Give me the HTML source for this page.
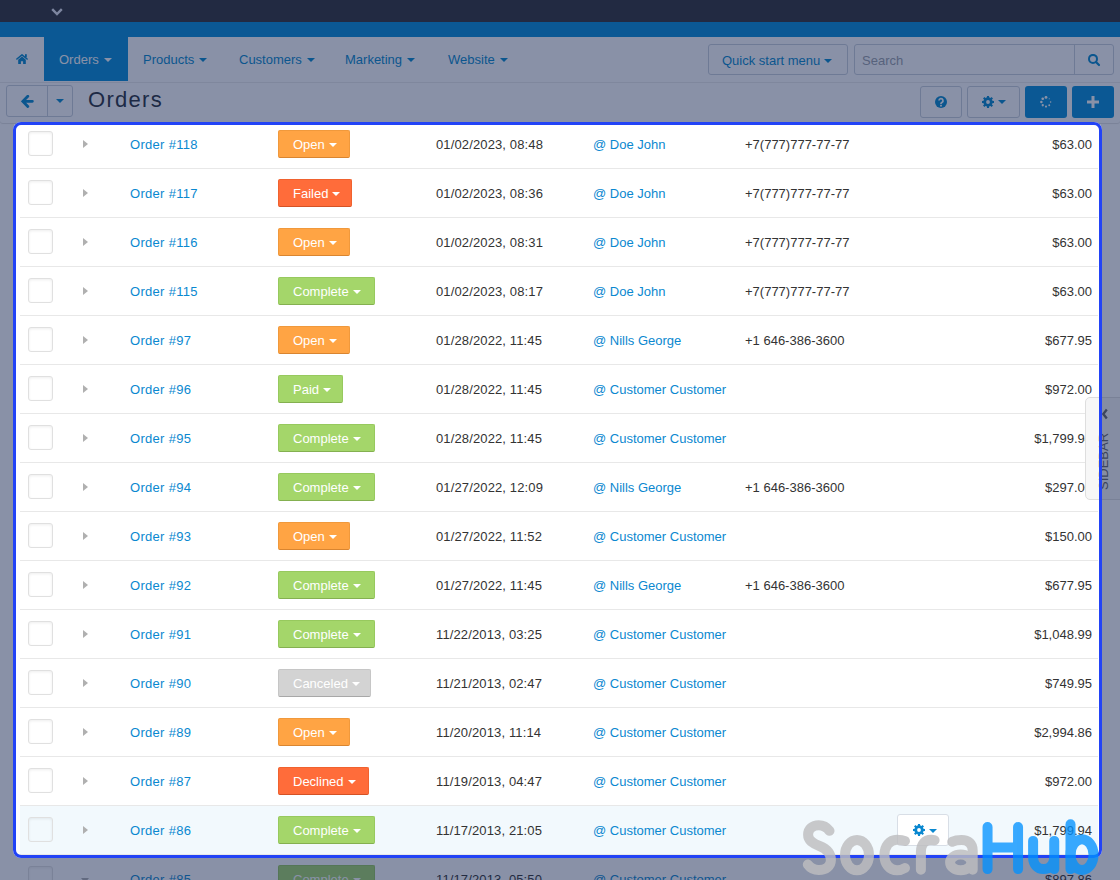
<!DOCTYPE html>
<html><head><meta charset="utf-8">
<style>
*{box-sizing:border-box;margin:0;padding:0}
html,body{width:1120px;height:880px;overflow:hidden}
body{position:relative;background:#fff;font-family:"Liberation Sans",sans-serif;font-size:13px;color:#333}
.abs{position:absolute}
svg{display:block}
#topbar{left:0;top:0;width:1120px;height:22px;background:#303134}
#bluebar{left:0;top:22px;width:1120px;height:15px;background:#028dd8}
#nav{left:0;top:37px;width:1120px;height:46px;background:#fff;border-bottom:1px solid #ebebeb}
.navi{position:absolute;top:0;height:44px;line-height:46px;color:#0388cc;white-space:nowrap}
.navi.act{background:#028dd8;color:#fff;left:44px;width:84px;padding-left:15px}
.caret{display:inline-block;width:0;height:0;border-left:4px solid transparent;border-right:4px solid transparent;border-top:4px solid currentColor;vertical-align:middle;margin-left:5px;position:relative;top:-1px}
#toolbar{z-index:2;left:0;top:83px;width:1120px;height:40px;background:#fff;border-radius:0 0 3px 3px;box-shadow:0 1px 1px rgba(0,0,0,.13)}
.btn{position:absolute;border:1px solid #c9d0da;border-radius:3px;background:#fff}
.btnp{position:absolute;border-radius:3px;background:#028dd8}
#content{left:13px;top:122px;width:1089px;height:760px;background:#fff}
.row{position:absolute;left:20px;width:1078px;height:49px;border-top:1px solid #e8e8e8;background:#fff}
.row.hover{background:#f2f9fd}
.cb{position:absolute;left:8px;top:11px;width:25px;height:25px;border:1px solid #e0e0e0;border-radius:3px;background:transparent;box-shadow:inset 0 1px 3px rgba(0,0,0,.07)}
.tri{position:absolute;left:63px;top:20px;width:0;height:0;border-top:4px solid transparent;border-bottom:4px solid transparent;border-left:5px solid #b0b0b0}
.trid{position:absolute;left:61px;top:23px;width:0;height:0;border-left:4px solid transparent;border-right:4px solid transparent;border-top:5px solid #b0b0b0}
.ord{position:absolute;left:110px;top:1px;letter-spacing:.3px;line-height:48px;color:#0a88d0;white-space:nowrap}
.st{position:absolute;left:258px;top:10px;height:28px;line-height:27px;color:#fff;border-radius:2px;padding-left:14px;white-space:nowrap}
.st .caret{margin-left:4px;border-top-color:#fff}
.open{background:#ffa444;border:1px solid #f0993c;border-bottom-color:#d98530}
.failed{background:#ff6c3a;border:1px solid #f0622f;border-bottom-color:#d45226}
.complete{background:#a4d66a;border:1px solid #97c95e;border-bottom-color:#84b050}
.paid{background:#a4d66a;border:1px solid #97c95e;border-bottom-color:#84b050}
.canceled{background:#d3d3d3;border:1px solid #c6c6c6;border-bottom-color:#a8a8a8}
.dt{position:absolute;left:416px;top:1px;letter-spacing:.13px;line-height:48px;white-space:nowrap}
.cu{position:absolute;left:573px;top:1px;line-height:48px;color:#0a88d0;white-space:nowrap}
.ph{position:absolute;left:725px;top:1px;line-height:48px;white-space:nowrap}
.am{position:absolute;right:6px;top:1px;line-height:48px;white-space:nowrap}
.gbtn{position:absolute;left:877px;top:8px;width:52px;height:32px;border:1px solid #d8dee6;border-radius:3px;background:#fff}
.gc{position:absolute;left:31px;top:14px;margin:0;border-top-color:#0a88d0}
#sidebar{z-index:3;left:1085px;top:397px;width:60px;height:103px;background:#f7f7f7;border:1px solid #dedede;border-radius:5px 0 0 5px}
#hl{z-index:5;left:13px;top:122px;width:1089px;height:736px;border:3px solid #2243f6;border-radius:8px;box-shadow:0 0 0 3000px rgba(20,35,80,.5)}
#wm{left:790px;top:800px}

</style></head><body>
<svg width="0" height="0" style="position:absolute">
<defs>
<symbol id="gear" viewBox="0 0 12 12"><circle cx="6" cy="6" r="3.3" fill="none" stroke="currentColor" stroke-width="2.8"/><g fill="currentColor"><rect x="4.95" y="0" width="2.1" height="3.2" transform="rotate(0 6 6)"/><rect x="4.95" y="0" width="2.1" height="3.2" transform="rotate(45 6 6)"/><rect x="4.95" y="0" width="2.1" height="3.2" transform="rotate(90 6 6)"/><rect x="4.95" y="0" width="2.1" height="3.2" transform="rotate(135 6 6)"/><rect x="4.95" y="0" width="2.1" height="3.2" transform="rotate(180 6 6)"/><rect x="4.95" y="0" width="2.1" height="3.2" transform="rotate(225 6 6)"/><rect x="4.95" y="0" width="2.1" height="3.2" transform="rotate(270 6 6)"/><rect x="4.95" y="0" width="2.1" height="3.2" transform="rotate(315 6 6)"/></g></symbol>
</defs>
</svg>
<div id="topbar" class="abs">
  <svg class="abs" style="left:51px;top:8px" width="12" height="8" viewBox="0 0 12 8"><path d="M1.2 1.2L6 6l4.8-4.8" stroke="#e8e8f0" stroke-width="2.4" fill="none"/></svg>
</div>
<div id="bluebar" class="abs"></div>
<div id="nav" class="abs">
  <svg class="abs" style="left:16px;top:17px" width="13" height="11" viewBox="0 0 13 11"><path d="M.9 5L6 .9 11.1 5" stroke="#0388cc" stroke-width="1.6" fill="none" stroke-linecap="round" stroke-linejoin="round"/><rect x="9" y=".2" width="1.8" height="3.2" fill="#0388cc"/><path d="M2.2 5.7L6 2.6 9.8 5.7V10H7.1V7.2H4.9V10H2.2z" fill="#0388cc"/></svg>
  <div class="navi act">Orders<span class="caret"></span></div>
  <div class="navi" style="left:143px">Products<span class="caret"></span></div>
  <div class="navi" style="left:239px">Customers<span class="caret"></span></div>
  <div class="navi" style="left:345px">Marketing<span class="caret"></span></div>
  <div class="navi" style="left:448px">Website<span class="caret"></span></div>
  <div class="btn" style="left:708px;top:7px;width:140px;height:31px;line-height:31px;padding-left:13px;color:#0388cc">Quick start menu<span class="caret" style="margin-left:4px"></span></div>
  <div class="btn" style="left:854px;top:7px;width:260px;height:31px;line-height:31px;padding-left:7px;color:#9aa0a8;border-radius:3px">Search
    <div class="abs" style="left:219px;top:0;width:1px;height:29px;background:#c9d0da"></div>
    <svg class="abs" style="left:233px;top:9px" width="14" height="14" viewBox="0 0 14 14"><circle cx="5" cy="4.9" r="4" stroke="#0388cc" stroke-width="2" fill="none"/><path d="M8.2 8.2L11 11" stroke="#0388cc" stroke-width="2.2" stroke-linecap="round"/></svg>
  </div>
</div>
<div id="toolbar" class="abs">
  <div class="btn" style="left:6px;top:2px;width:67px;height:32px">
    <div class="abs" style="left:40px;top:0;width:1px;height:30px;background:#c9d0da"></div>
    <svg class="abs" style="left:14px;top:9px" width="13" height="14" viewBox="0 0 13 14"><path d="M6.8 1.2L1.8 6.3 6.8 11.4M2.2 6.3H11.4" stroke="#0388cc" stroke-width="2.8" fill="none" stroke-linecap="round"/></svg>
    <span class="caret" style="position:absolute;left:49px;top:13px;margin:0;color:#0388cc"></span>
  </div>
  <div class="abs" style="left:88px;top:-1px;line-height:36px;font-size:22px;color:#28303a;letter-spacing:1.3px">Orders</div>
  <div class="btn" style="left:920px;top:3px;width:42px;height:32px">
    <svg class="abs" style="left:14px;top:9px" width="12" height="12" viewBox="0 0 12 12"><circle cx="6" cy="6" r="6" fill="#0388cc"/><path d="M4 4.6a2 2 0 1 1 2.9 1.8c-.6.3-.9.6-.9 1.2v.5" stroke="#fff" stroke-width="1.7" fill="none"/><rect x="5.1" y="8.8" width="1.8" height="1.7" fill="#fff"/></svg>
  </div>
  <div class="btn" style="left:967px;top:3px;width:53px;height:32px">
    <svg class="abs" style="left:14px;top:9px;color:#0388cc" width="12" height="12" viewBox="0 0 12 12"><circle cx="6" cy="6" r="3.3" fill="none" stroke="currentColor" stroke-width="2.8"/><g fill="currentColor"><rect x="4.95" y="0" width="2.1" height="3.2" transform="rotate(0 6 6)"/><rect x="4.95" y="0" width="2.1" height="3.2" transform="rotate(45 6 6)"/><rect x="4.95" y="0" width="2.1" height="3.2" transform="rotate(90 6 6)"/><rect x="4.95" y="0" width="2.1" height="3.2" transform="rotate(135 6 6)"/><rect x="4.95" y="0" width="2.1" height="3.2" transform="rotate(180 6 6)"/><rect x="4.95" y="0" width="2.1" height="3.2" transform="rotate(225 6 6)"/><rect x="4.95" y="0" width="2.1" height="3.2" transform="rotate(270 6 6)"/><rect x="4.95" y="0" width="2.1" height="3.2" transform="rotate(315 6 6)"/></g></svg>
    <span class="caret" style="position:absolute;left:30px;top:13px;margin:0;color:#0388cc"></span>
  </div>
  <div class="btnp" style="left:1025px;top:3px;width:42px;height:32px">
    <svg class="abs" style="left:15px;top:10px" width="12" height="12" viewBox="0 0 12 12">
      <circle cx="6.00" cy="1.40" r="1.45" fill="#fff"/><circle cx="2.75" cy="2.75" r="1.35" fill="#fff"/><circle cx="1.40" cy="6.00" r="1.25" fill="#fff"/><circle cx="2.75" cy="9.25" r="1.15" fill="#fff"/><circle cx="6.00" cy="10.60" r="1.05" fill="#fff"/><circle cx="9.25" cy="9.25" r="0.95" fill="#fff"/><circle cx="10.60" cy="6.00" r="0.8" fill="#fff"/><circle cx="9.25" cy="2.75" r="0.6" fill="#fff"/></svg>
  </div>
  <div class="btnp" style="left:1072px;top:3px;width:42px;height:32px">
    <svg class="abs" style="left:15px;top:10px" width="12" height="12" viewBox="0 0 12 12"><path d="M6 0v12M0 6h12" stroke="#fff" stroke-width="3"/></svg>
  </div>
</div>
<div id="content" class="abs"></div>
<div class="row" style="top:119px"><div class="cb"></div><div class="tri"></div><div class="ord">Order #118</div><div class="st open" style="width:72px">Open<span class="caret"></span></div><div class="dt">01/02/2023, 08:48</div><div class="cu">@ Doe John</div><div class="ph">+7(777)777-77-77</div><div class="am">$63.00</div></div>
<div class="row" style="top:168px"><div class="cb"></div><div class="tri"></div><div class="ord">Order #117</div><div class="st failed" style="width:74px">Failed<span class="caret"></span></div><div class="dt">01/02/2023, 08:36</div><div class="cu">@ Doe John</div><div class="ph">+7(777)777-77-77</div><div class="am">$63.00</div></div>
<div class="row" style="top:217px"><div class="cb"></div><div class="tri"></div><div class="ord">Order #116</div><div class="st open" style="width:72px">Open<span class="caret"></span></div><div class="dt">01/02/2023, 08:31</div><div class="cu">@ Doe John</div><div class="ph">+7(777)777-77-77</div><div class="am">$63.00</div></div>
<div class="row" style="top:266px"><div class="cb"></div><div class="tri"></div><div class="ord">Order #115</div><div class="st complete" style="width:97px">Complete<span class="caret"></span></div><div class="dt">01/02/2023, 08:17</div><div class="cu">@ Doe John</div><div class="ph">+7(777)777-77-77</div><div class="am">$63.00</div></div>
<div class="row" style="top:315px"><div class="cb"></div><div class="tri"></div><div class="ord">Order #97</div><div class="st open" style="width:72px">Open<span class="caret"></span></div><div class="dt">01/28/2022, 11:45</div><div class="cu">@ Nills George</div><div class="ph">+1 646-386-3600</div><div class="am">$677.95</div></div>
<div class="row" style="top:364px"><div class="cb"></div><div class="tri"></div><div class="ord">Order #96</div><div class="st paid" style="width:65px">Paid<span class="caret"></span></div><div class="dt">01/28/2022, 11:45</div><div class="cu">@ Customer Customer</div><div class="ph"></div><div class="am">$972.00</div></div>
<div class="row" style="top:413px"><div class="cb"></div><div class="tri"></div><div class="ord">Order #95</div><div class="st complete" style="width:97px">Complete<span class="caret"></span></div><div class="dt">01/28/2022, 11:45</div><div class="cu">@ Customer Customer</div><div class="ph"></div><div class="am">$1,799.94</div></div>
<div class="row" style="top:462px"><div class="cb"></div><div class="tri"></div><div class="ord">Order #94</div><div class="st complete" style="width:97px">Complete<span class="caret"></span></div><div class="dt">01/27/2022, 12:09</div><div class="cu">@ Nills George</div><div class="ph">+1 646-386-3600</div><div class="am">$297.00</div></div>
<div class="row" style="top:511px"><div class="cb"></div><div class="tri"></div><div class="ord">Order #93</div><div class="st open" style="width:72px">Open<span class="caret"></span></div><div class="dt">01/27/2022, 11:52</div><div class="cu">@ Customer Customer</div><div class="ph"></div><div class="am">$150.00</div></div>
<div class="row" style="top:560px"><div class="cb"></div><div class="tri"></div><div class="ord">Order #92</div><div class="st complete" style="width:97px">Complete<span class="caret"></span></div><div class="dt">01/27/2022, 11:45</div><div class="cu">@ Nills George</div><div class="ph">+1 646-386-3600</div><div class="am">$677.95</div></div>
<div class="row" style="top:609px"><div class="cb"></div><div class="tri"></div><div class="ord">Order #91</div><div class="st complete" style="width:97px">Complete<span class="caret"></span></div><div class="dt">11/22/2013, 03:25</div><div class="cu">@ Customer Customer</div><div class="ph"></div><div class="am">$1,048.99</div></div>
<div class="row" style="top:658px"><div class="cb"></div><div class="tri"></div><div class="ord">Order #90</div><div class="st canceled" style="width:93px">Canceled<span class="caret"></span></div><div class="dt">11/21/2013, 02:47</div><div class="cu">@ Customer Customer</div><div class="ph"></div><div class="am">$749.95</div></div>
<div class="row" style="top:707px"><div class="cb"></div><div class="tri"></div><div class="ord">Order #89</div><div class="st open" style="width:72px">Open<span class="caret"></span></div><div class="dt">11/20/2013, 11:14</div><div class="cu">@ Customer Customer</div><div class="ph"></div><div class="am">$2,994.86</div></div>
<div class="row" style="top:756px"><div class="cb"></div><div class="tri"></div><div class="ord">Order #87</div><div class="st failed" style="width:91px">Declined<span class="caret"></span></div><div class="dt">11/19/2013, 04:47</div><div class="cu">@ Customer Customer</div><div class="ph"></div><div class="am">$972.00</div></div>
<div class="row hover" style="top:805px"><div class="cb"></div><div class="tri"></div><div class="ord">Order #86</div><div class="st complete" style="width:97px">Complete<span class="caret"></span></div><div class="dt">11/17/2013, 21:05</div><div class="cu">@ Customer Customer</div><div class="ph"></div><div class="gbtn"><svg width="12" height="12" viewBox="0 0 12 12" style="position:absolute;left:15px;top:9px;color:#0a88d0"><circle cx="6" cy="6" r="3.3" fill="none" stroke="currentColor" stroke-width="2.8"/><g fill="currentColor"><rect x="4.95" y="0" width="2.1" height="3.2" transform="rotate(0 6 6)"/><rect x="4.95" y="0" width="2.1" height="3.2" transform="rotate(45 6 6)"/><rect x="4.95" y="0" width="2.1" height="3.2" transform="rotate(90 6 6)"/><rect x="4.95" y="0" width="2.1" height="3.2" transform="rotate(135 6 6)"/><rect x="4.95" y="0" width="2.1" height="3.2" transform="rotate(180 6 6)"/><rect x="4.95" y="0" width="2.1" height="3.2" transform="rotate(225 6 6)"/><rect x="4.95" y="0" width="2.1" height="3.2" transform="rotate(270 6 6)"/><rect x="4.95" y="0" width="2.1" height="3.2" transform="rotate(315 6 6)"/></g></svg><span class="caret gc"></span></div><div class="am">$1,799.94</div></div>
<div class="row" style="top:854px"><div class="cb"></div><div class="trid"></div><div class="ord">Order #85</div><div class="st complete" style="width:97px">Complete<span class="caret"></span></div><div class="dt">11/17/2013, 05:50</div><div class="cu">@ Customer Customer</div><div class="ph"></div><div class="am">$897.86</div></div>
<div id="sidebar" class="abs">
  <svg class="abs" style="left:16px;top:10px" width="7" height="12" viewBox="0 0 7 12"><path d="M4.8 1.5L1.3 6 4.8 10.5" stroke="#666" stroke-width="2.3" fill="none"/></svg>
  <div class="abs" style="left:11px;top:92px;width:60px;height:14px;line-height:14px;font-size:13px;color:#666;transform-origin:0 0;transform:rotate(-90deg)">SIDEBAR</div>
</div>
<div id="hl" class="abs"></div>
<svg class="abs" style="left:0;top:0;z-index:6" width="1120" height="880"><g opacity="0.82" fill="none" stroke="rgb(190,190,192)" stroke-width="10" stroke-linecap="round" stroke-linejoin="round"><path d="M829.5 830.8C826.5 827 823 825.3 818.8 825.3C812.5 825.3 808.1 829 808.1 834.8C808.1 840.5 812.5 843.2 819.5 846C826.5 848.8 830.9 852.8 830.9 860C830.9 866.2 825.8 870 818.8 870C814.2 870 810.5 868.2 807.8 864.5"/><ellipse cx="857" cy="855.15" rx="12" ry="15.1"/><path d="M905 841C902.5 839.9 900 839.75 897 839.75C889.5 839.75 884.4 846.5 884.4 855.2C884.4 864 889.5 870.3 897 870.3C900 870.3 902.5 869.5 905 868"/><path d="M920.9 869.8V852C920.9 844 925 839.8 931 839.8L934.6 840.3"/><path d="M952.2 841.8C955 840.4 958 839.9 961.5 839.9C968.5 839.9 972.7 843.5 972.7 850.5V869.8"/><ellipse cx="960.7" cy="862.4" rx="10.6" ry="7.8"/></g><g opacity="0.77" fill="none" stroke="rgb(0,145,255)" stroke-width="10" stroke-linecap="round" stroke-linejoin="round"><path d="M987.55 827V869.1M1018.05 827V869.1M987.55 847.6H1018.05"/><path d="M1033.1 840.9V857C1033.1 864.5 1037.5 869.1 1043.5 869.1C1049.8 869.1 1054.25 864.5 1054.25 857V840.9M1054.25 848V869.1"/><path d="M1070.5 824.3V869.1"/><ellipse cx="1082" cy="854.65" rx="11.5" ry="15.4"/></g></svg>

</body></html>
